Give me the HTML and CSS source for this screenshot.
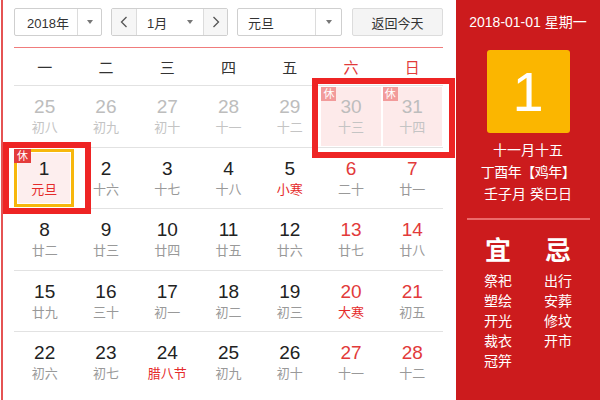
FILE: index.html
```html
<!DOCTYPE html>
<html lang="zh">
<head>
<meta charset="utf-8">
<link rel="stylesheet" href="styles.css">
</head>
<body>
<div class="page">
  <div class="cal">
    <div class="toolbar">
      <div class="sel sel-year"><span class="sel-text">2018年</span><span class="sel-arrow"><i class="tri"></i></span></div>
      <div class="sel sel-month">
        <span class="nav"><svg width="8" height="12" viewBox="0 0 8 12"><polyline points="6.5,1 1.5,6 6.5,11" fill="none" stroke="#555" stroke-width="1.3"/></svg></span>
        <span class="sel-text mid">1月<i class="tri"></i></span>
        <span class="nav nav-r"><svg width="8" height="12" viewBox="0 0 8 12"><polyline points="1.5,1 6.5,6 1.5,11" fill="none" stroke="#555" stroke-width="1.3"/></svg></span>
      </div>
      <div class="sel sel-holiday"><span class="sel-text">元旦</span><span class="sel-arrow"><i class="tri"></i></span></div>
      <div class="btn-today">返回今天</div>
    </div>
    <div class="weekdays">
      <span>一</span><span>二</span><span>三</span><span>四</span><span>五</span><span class="we">六</span><span class="we">日</span>
    </div>
    <div class="days">
      <div class="day other"><div class="num">25</div><div class="lunar">初八</div></div>
      <div class="day other"><div class="num">26</div><div class="lunar">初九</div></div>
      <div class="day other"><div class="num">27</div><div class="lunar">初十</div></div>
      <div class="day other"><div class="num">28</div><div class="lunar">十一</div></div>
      <div class="day other"><div class="num">29</div><div class="lunar">十二</div></div>
      <div class="day other rest"><span class="badge">休</span><div class="num">30</div><div class="lunar">十三</div></div>
      <div class="day other rest"><span class="badge">休</span><div class="num">31</div><div class="lunar">十四</div></div>

      <div class="day rest selected"><span class="badge">休</span><div class="num">1</div><div class="lunar fest">元旦</div></div>
      <div class="day"><div class="num">2</div><div class="lunar">十六</div></div>
      <div class="day"><div class="num">3</div><div class="lunar">十七</div></div>
      <div class="day"><div class="num">4</div><div class="lunar">十八</div></div>
      <div class="day"><div class="num">5</div><div class="lunar fest">小寒</div></div>
      <div class="day weekend"><div class="num">6</div><div class="lunar">二十</div></div>
      <div class="day weekend"><div class="num">7</div><div class="lunar">廿一</div></div>

      <div class="day"><div class="num">8</div><div class="lunar">廿二</div></div>
      <div class="day"><div class="num">9</div><div class="lunar">廿三</div></div>
      <div class="day"><div class="num">10</div><div class="lunar">廿四</div></div>
      <div class="day"><div class="num">11</div><div class="lunar">廿五</div></div>
      <div class="day"><div class="num">12</div><div class="lunar">廿六</div></div>
      <div class="day weekend"><div class="num">13</div><div class="lunar">廿七</div></div>
      <div class="day weekend"><div class="num">14</div><div class="lunar">廿八</div></div>

      <div class="day"><div class="num">15</div><div class="lunar">廿九</div></div>
      <div class="day"><div class="num">16</div><div class="lunar">三十</div></div>
      <div class="day"><div class="num">17</div><div class="lunar">初一</div></div>
      <div class="day"><div class="num">18</div><div class="lunar">初二</div></div>
      <div class="day"><div class="num">19</div><div class="lunar">初三</div></div>
      <div class="day weekend"><div class="num">20</div><div class="lunar fest">大寒</div></div>
      <div class="day weekend"><div class="num">21</div><div class="lunar">初五</div></div>

      <div class="day last"><div class="num">22</div><div class="lunar">初六</div></div>
      <div class="day last"><div class="num">23</div><div class="lunar">初七</div></div>
      <div class="day last"><div class="num">24</div><div class="lunar fest">腊八节</div></div>
      <div class="day last"><div class="num">25</div><div class="lunar">初九</div></div>
      <div class="day last"><div class="num">26</div><div class="lunar">初十</div></div>
      <div class="day last weekend"><div class="num">27</div><div class="lunar">十一</div></div>
      <div class="day last weekend"><div class="num">28</div><div class="lunar">十二</div></div>
    </div>
    <div class="mark mark-a"></div>
    <div class="mark mark-b"></div>
  </div>
  <div class="panel">
    <div class="p-date">2018-01-01 星期一</div>
    <div class="big">1</div>
    <div class="p-lunar">
      <div>十一月十五</div>
      <div class="gz">丁酉年【鸡年】</div>
      <div>壬子月 癸巳日</div>
    </div>
    <div class="p-line"></div>
    <div class="yiji">
      <div class="yj-col">
        <div class="yj-head">宜</div>
        <div>祭祀</div><div>塑绘</div><div>开光</div><div>裁衣</div><div>冠笄</div>
      </div>
      <div class="yj-col">
        <div class="yj-head">忌</div>
        <div>出行</div><div>安葬</div><div>修坟</div><div>开市</div>
      </div>
    </div>
  </div>
</div>
</body>
</html>
```

FILE: styles.css
```css
* { box-sizing: border-box; }
html, body { margin: 0; padding: 0; background: #fff; }
body {
  font-family: "Liberation Sans", "Noto Sans CJK SC", sans-serif;
  color: #333;
  width: 600px;
  height: 400px;
  overflow: hidden;
}
.page {
  display: flex;
  height: 400px;
  padding-left: 1px;
}
.cal {
  position: relative;
  width: 455px;
  border-left: 2px solid #e55353;
  padding: 8px 0 0 11px;
}
.toolbar {
  display: flex;
  width: 429px;
  height: 28px;
  gap: 9px;
}
.sel {
  display: flex;
  height: 28px;
  border: 1px solid #cfcfcf;
  border-radius: 2px;
  background: #fff;
  font-size: 13px;
  color: #333;
}
.sel-text {
  display: flex;
  align-items: center;
  padding-left: 12px;
}
.sel-arrow {
  display: flex;
  align-items: center;
  justify-content: center;
  border-left: 1px solid #dcdcdc;
}
.tri {
  display: inline-block;
  width: 0;
  height: 0;
  border-left: 3.5px solid transparent;
  border-right: 3.5px solid transparent;
  border-top: 4px solid #777;
}
.sel-year { width: 88px; }
.sel-year .sel-text { width: 62px; }
.sel-year .sel-arrow { width: 24px; }
.sel-month { width: 117px; }
.nav {
  width: 25px;
  display: flex;
  align-items: center;
  justify-content: center;
  background: #f6f6f6;
  border-right: 1px solid #dcdcdc;
}
.nav-r {
  border-right: none;
  border-left: 1px solid #dcdcdc;
  width: 24px;
}
.sel-month .mid {
  width: 66px;
  padding-left: 10px;
  justify-content: space-between;
  padding-right: 10px;
}
.sel-holiday { width: 105px; }
.sel-holiday .sel-text { width: 77px; padding-left: 10px; }
.sel-holiday .sel-arrow { width: 26px; }
.btn-today {
  width: 91px;
  margin-left: 1px;
  height: 28px;
  border: 1px solid #dcdcdc;
  border-radius: 2px;
  background: #f4f4f4;
  font-size: 13px;
  display: flex;
  align-items: center;
  justify-content: center;
  color: #333;
}
.weekdays {
  margin-top: 11px;
  width: 429px;
  border-top: 1px solid #f07c7c;
  border-bottom: 1px solid #e2e2e2;
  height: 39px;
  display: grid;
  grid-template-columns: repeat(7, 1fr);
  align-items: center;
  text-align: center;
  font-size: 15px;
  color: #333;
}
.weekdays .we { color: #e23a3a; }
.days {
  width: 429px;
  display: grid;
  grid-template-columns: repeat(7, 1fr);
}
.day {
  position: relative;
  height: 61.5px;
  border-bottom: 1px solid #e2e2e2;
  display: flex;
  flex-direction: column;
  align-items: center;
  justify-content: center;
  padding-top: 2px;
}
.day.last { border-bottom: none; height: 60.5px; }
.num {
  font-size: 19px;
  line-height: 22px;
  color: #222;
}
.lunar {
  font-size: 13px;
  line-height: 20px;
  color: #999;
}
.weekend .num { color: #e23a3a; }
.lunar.fest { color: #e52b2b; }
.other .num { color: #bdbdbd; }
.other .lunar { color: #c4c4c4; }
.rest {
  background: #fdeaea;
  box-shadow: inset 0 0 0 1px #fff;
}
.selected {
  background: #fdeeee;
  border: 3px solid #f7b70c;
  margin: 1px 1px 1px 0;
  height: 58.5px;
}
.badge {
  position: absolute;
  left: 0;
  top: 0;
  width: 15px;
  height: 14px;
  background: #e43b3b;
  color: #fff;
  font-size: 11px;
  line-height: 14px;
  text-align: center;
}
.other .badge { background: #f29b9b; left: 1px; top: 1px; }
.selected .badge { left: -3px; top: -3px; width: 17px; }
.mark {
  position: absolute;
  border: 6px solid #ee2424;
  pointer-events: none;
}
.mark-a { left: 0px; top: 142px; width: 88px; height: 72px; }
.mark-b { left: 309px; top: 78px; width: 143px; height: 80px; }
.panel {
  width: 144px;
  background: #cc1b1d;
  color: #fff;
  display: flex;
  flex-direction: column;
  align-items: center;
}
.p-date {
  margin-top: 12px;
  font-size: 14px;
  line-height: 20px;
}
.big {
  margin-top: 18px;
  width: 83px;
  height: 83px;
  border-radius: 3px;
  background: #fbb600;
  font-size: 56px;
  line-height: 83px;
  text-align: center;
  color: #fff;
}
.p-lunar {
  margin-top: 6px;
  font-size: 14px;
  line-height: 22px;
  text-align: center;
}
.p-lunar .gz { letter-spacing: -0.5px; }
.p-line {
  margin-top: 13px;
  width: 123px;
  height: 2px;
  background: #ec6a6a;
}
.yiji {
  display: flex;
  gap: 10px;
  margin-top: 16px;
}
.yj-col {
  width: 50px;
  display: flex;
  flex-direction: column;
  align-items: center;
  font-size: 14px;
  line-height: 20px;
}
.yj-head {
  font-size: 26px;
  line-height: 30px;
  font-weight: bold;
  margin-bottom: 5px;
}
```
